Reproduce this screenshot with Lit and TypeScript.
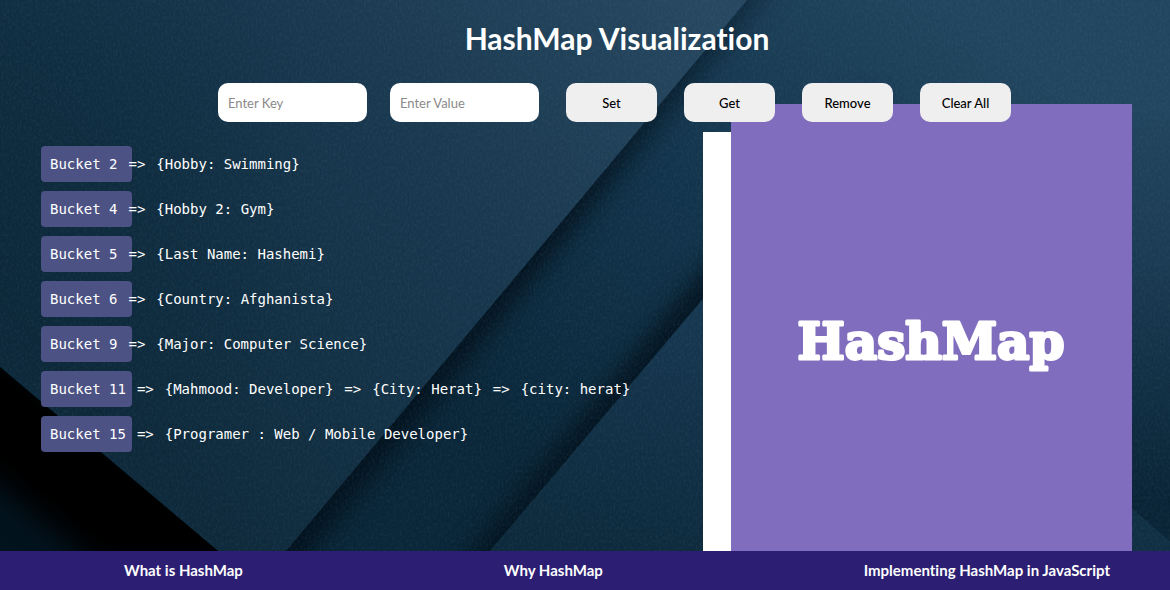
import { LitElement, html, css, svg } from "lit";
import { customElement, state } from "lit/decorators.js";

interface Bucket {
  index: number;
  entries: [string, string][];
}

@customElement("paper-backdrop")
class PaperBackdrop extends LitElement {
  static styles = css`
    :host {
      position: absolute;
      inset: 0;
      z-index: -2;
      overflow: hidden;
    }
    .scene {
      display: block;
      width: 100%;
      height: 100%;
    }
  `;

  render() {
    return html`<svg class="scene" viewBox="0 0 1170 590" preserveAspectRatio="xMidYMid slice" aria-hidden="true">
      ${svg`
        <defs>
          <linearGradient id="base" gradientUnits="userSpaceOnUse" x1="950" y1="0" x2="560" y2="500">
            <stop offset="0" stop-color="#22455f" />
            <stop offset="0.5" stop-color="#12344b" />
            <stop offset="1" stop-color="#0a2638" />
          </linearGradient>
          <linearGradient id="sheet" gradientUnits="userSpaceOnUse" x1="700" y1="0" x2="160" y2="480">
            <stop offset="0" stop-color="#26475f" />
            <stop offset="0.5" stop-color="#17364c" />
            <stop offset="1" stop-color="#0e293a" />
          </linearGradient>
          <linearGradient id="low" gradientUnits="userSpaceOnUse" x1="700" y1="320" x2="640" y2="560">
            <stop offset="0" stop-color="#163750" />
            <stop offset="1" stop-color="#0d293b" />
          </linearGradient>
          <radialGradient id="dim" gradientUnits="userSpaceOnUse" cx="0" cy="200" r="330">
            <stop offset="0" stop-color="#0a2638" stop-opacity="0.6" />
            <stop offset="1" stop-color="#0a2638" stop-opacity="0" />
          </radialGradient>
          <linearGradient id="edge" gradientUnits="userSpaceOnUse" x1="0" y1="104" x2="0" y2="500">
            <stop offset="0" stop-color="#082233" stop-opacity="0" />
            <stop offset="0.4" stop-color="#082233" stop-opacity="0.3" />
            <stop offset="1" stop-color="#082233" stop-opacity="0.95" />
          </linearGradient>
          <linearGradient id="cast" gradientUnits="userSpaceOnUse" x1="720" y1="0" x2="560" y2="230">
            <stop offset="0" stop-color="#010d17" stop-opacity="0.5" />
            <stop offset="1" stop-color="#010d17" stop-opacity="0.95" />
          </linearGradient>
          <filter id="soft" x="-20%" y="-20%" width="140%" height="140%" color-interpolation-filters="sRGB">
            <feGaussianBlur stdDeviation="14" />
          </filter>
          <filter id="grain" x="0" y="0" width="100%" height="100%" color-interpolation-filters="sRGB">
            <feTurbulence type="fractalNoise" baseFrequency="0.5 0.3" numOctaves="2" seed="4" />
            <feColorMatrix type="matrix" values="0 0 0 0 0.4  0 0 0 0 0.56  0 0 0 0 0.68  0.9 0 0 0 -0.35" />
          </filter>
          <clipPath id="band"><path d="M747 0H1170V104H868L703 299L490 551L457 590H253L286 551Z" /></clipPath>
          <clipPath id="corner"><path d="M0 367L218 551L264 590H0Z" /></clipPath>
          <clipPath id="lit"><path d="M0 0H1170V590H264L0 367Z" /></clipPath>
        </defs>
        <rect width="1170" height="590" fill="url(#base)" />
        <g clip-path="url(#band)">
          <path d="M735 -20L776 -20L268 600H220Z" fill="url(#cast)" filter="url(#soft)" />
          <path d="M880 104L703 316L457 610H430L674 310L850 104Z" fill="#000b14" filter="url(#soft)" />
        </g>
        <path d="M868 104L703 299L457 590H1170V104Z" fill="url(#low)" />
        <rect x="1090" y="104" width="80" height="486" fill="#22455f" />
        <rect x="1090" y="104" width="80" height="486" fill="url(#edge)" />
        <path d="M1120 498L1180 550V590H1110Z" fill="#112f42" />
        <path d="M0 0H747L286 551L253 590H264L218 551L0 367Z" fill="url(#sheet)" />
        <path d="M0 0H747L286 551H218L0 367Z" fill="url(#dim)" />
        <path d="M0 367L218 551L264 590H0Z" fill="#03131e" />
        <g clip-path="url(#corner)">
          <path d="M-60 300L264 560L300 600H140L-60 436Z" fill="#000" filter="url(#soft)" />
        </g>
        <rect width="1170" height="590" filter="url(#grain)" opacity="0.25" clip-path="url(#lit)" />
      `}
    </svg>`;
  }
}

@customElement("app-root")
class AppRoot extends LitElement {
  @state() private buckets: Bucket[] = [
    { index: 2, entries: [["Hobby", "Swimming"]] },
    { index: 4, entries: [["Hobby 2", "Gym"]] },
    { index: 5, entries: [["Last Name", "Hashemi"]] },
    { index: 6, entries: [["Country", "Afghanista"]] },
    { index: 9, entries: [["Major", "Computer Science"]] },
    { index: 11, entries: [["Mahmood", "Developer"], ["City", "Herat"], ["city", "herat"]] },
    { index: 15, entries: [["Programer ", "Web / Mobile Developer"]] },
  ];

  static styles = css`
    :host {
      position: relative;
      z-index: 0;
      display: flex;
      flex-direction: column;
      min-height: 100vh;
      overflow: hidden;
      background: #14344a;
      color: #fff;
      font-family: "Coming Soon", Lato, "Open Sans", sans-serif;
      font-variant-ligatures: none;
    }
    * {
      box-sizing: border-box;
    }
    .title {
      margin: 0;
      padding: 18px 0 0 64px;
      font-size: 30px;
      line-height: 40px;
      font-weight: 700;
      text-align: center;
    }
    .controls {
      display: flex;
      justify-content: center;
      gap: 27px;
      padding: 25px 0 0 59px;
    }
    .fields {
      display: flex;
      gap: 23px;
    }
    .field,
    .action {
      height: 39px;
      border: 0;
      border-radius: 10px;
      font: inherit;
      font-size: 13px;
    }
    .field {
      width: 149px;
      padding: 0 10px;
      background: #fff;
      color: #222;
    }
    .field::placeholder {
      color: #8a8a8a;
      opacity: 1;
    }
    .action {
      width: 91px;
      padding: 0;
      background: #efefef;
      color: #000;
      font-weight: 500;
    }
    .content {
      flex: 1;
      display: grid;
      grid-template-columns: 662fr 429fr;
      padding: 0 38px 0 41px;
    }
    .buckets {
      display: flex;
      flex-direction: column;
      gap: 9px;
      margin: 0;
      padding: 24px 0;
      list-style: none;
      font: 14px/36px "DejaVu Sans Mono", monospace;
    }
    .bucket {
      display: flex;
      gap: 11px;
      white-space: pre;
    }
    .label {
      position: relative;
      padding-left: 9px;
    }
    .label::before {
      content: "";
      position: absolute;
      left: 0;
      top: 0;
      z-index: -1;
      width: 91px;
      height: 36px;
      border-radius: 4px;
      background: #4c5284;
    }
    .poster {
      position: relative;
      z-index: -1;
      display: flex;
      margin: -18px 0 0;
    }
    .strip {
      width: 28px;
      margin-top: 28px;
      background: #fff;
    }
    .card {
      flex: 1;
      display: grid;
      place-items: center;
      background: #806dbe;
    }
    .word {
      display: block;
      width: 100%;
      font: 700 50px "Cooper Black", "DejaVu Serif", serif;
      fill: #fff;
      stroke: #fff;
      stroke-width: 3px;
      stroke-linejoin: round;
    }
    .links {
      display: flex;
      justify-content: space-between;
      padding: 0 60px 0 124px;
      background: #2c1e72;
      font-size: 15px;
      line-height: 39px;
      font-weight: 700;
    }
    .link {
      color: #fff;
      text-decoration: none;
    }
  `;

  render() {
    return html`
      <paper-backdrop></paper-backdrop>
      <h1 class="title">HashMap Visualization</h1>
      <form class="controls" @submit=${(e: Event) => e.preventDefault()}>
        <div class="fields">
          <input class="field" type="text" aria-label="Enter Key" placeholder="Enter Key" />
          <input class="field" type="text" aria-label="Enter Value" placeholder="Enter Value" />
        </div>
        ${["Set", "Get", "Remove", "Clear All"].map(
          (name) => html`<button class="action" type="button">${name}</button>`
        )}
      </form>
      <main class="content">
        <ul class="buckets">
          ${this.buckets.map(
            (b) => html`<li class="bucket"><span class="label">Bucket ${b.index}</span>${b.entries.map(
              ([key, value]) => html`<span>=&gt;</span><span>{${key}: ${value}}</span>`
            )}</li>`
          )}
        </ul>
        <figure class="poster">
          <div class="strip"></div>
          <div class="card">
            <svg class="word" viewBox="0 0 401 140" role="img" aria-label="HashMap">
              <text x="200" y="101" text-anchor="middle">HashMap</text>
            </svg>
          </div>
        </figure>
      </main>
      <footer>
        <nav class="links">
          <a class="link" href="#what">What is HashMap</a>
          <a class="link" href="#why">Why HashMap</a>
          <a class="link" href="#implementing">Implementing HashMap in JavaScript</a>
        </nav>
      </footer>
    `;
  }
}
